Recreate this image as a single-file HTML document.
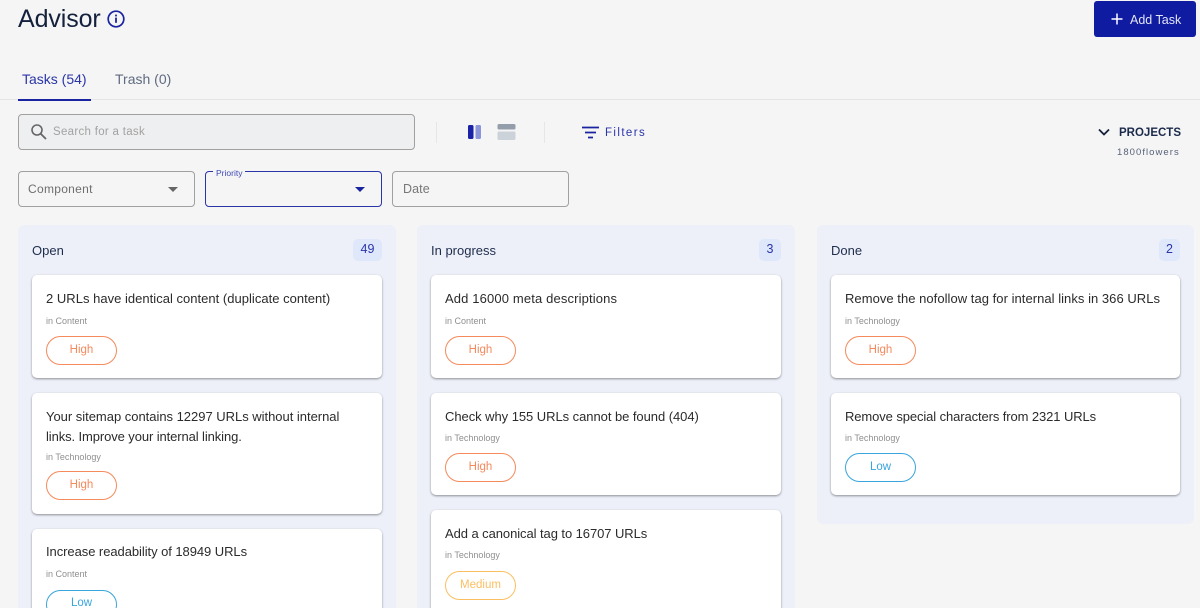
<!DOCTYPE html>
<html>
<head>
<meta charset="utf-8">
<style>
*{box-sizing:border-box}
html,body{margin:0;padding:0;width:1200px;height:608px;overflow:hidden}
body{background:#f5f5f5;font-family:"Liberation Sans",sans-serif;color:#222}
#w{position:relative;width:1200px;height:608px;overflow:hidden;background:#f5f5f5}
.a{position:absolute;white-space:nowrap}
.col{position:absolute;top:225px;width:378px;background:#edf0f8;border-radius:6px}
.colt{position:absolute;top:250px;font-size:13px;line-height:1;color:#1f2d4d;transform:translateY(-6px)}
.cnt{position:absolute;top:239px;height:22px;background:#dfe7fb;border-radius:5px;color:#2a35a8;font-size:12.5px;line-height:21px;text-align:center}
.card{position:absolute;width:350px;background:#fff;border-radius:5px;box-shadow:0 1px 2px rgba(60,60,70,.55)}
.t{position:absolute;left:14px;font-size:13px;line-height:20px;color:#2b2b2b;white-space:nowrap}
.s{position:absolute;left:14px;font-size:9px;line-height:12px;color:#8f8f8f;white-space:nowrap}
.p{position:absolute;left:14px;width:71px;height:29px;border-radius:15px;background:#fff;font-size:11.5px;line-height:26px;text-align:center;border:1px solid}
.h{border-color:#f58a5c;color:#f58a5c}
.l{border-color:#3aa5dc;color:#3aa5dc}
.m{border-color:#fbbf62;color:#fbbf62}
.box{position:absolute;border:1px solid #a0a0a0;border-radius:4px}
</style>
</head>
<body>
<div id="w">
<div class="a" style="left:18px;top:4px;font-size:25px;line-height:30px;color:#14213d;letter-spacing:-.1px">Advisor</div>
<svg class="a" style="left:107px;top:10px" width="18" height="18" viewBox="0 0 18 18"><circle cx="9" cy="9" r="7.8" fill="none" stroke="#1a23a0" stroke-width="1.7"/><rect x="8.1" y="7.6" width="1.8" height="5.2" fill="#1a23a0"/><rect x="8.1" y="4.6" width="1.8" height="1.8" fill="#1a23a0"/></svg>

<div class="a" style="left:1094px;top:1px;width:102px;height:36px;background:#0f1ba0;border-radius:3px"></div>
<svg class="a" style="left:1110px;top:12px" width="14" height="14" viewBox="0 0 14 14"><path d="M7 1.5V12.5M1.5 7H12.5" stroke="#fff" stroke-width="1.5" fill="none"/></svg>
<div class="a" style="left:1130px;top:13px;font-size:12.5px;line-height:14px;color:#e4e6f6">Add Task</div>

<div class="a" style="left:22px;top:71px;font-size:14px;line-height:16px;color:#2a35a8">Tasks (54)</div>
<div class="a" style="left:115px;top:71px;font-size:14px;line-height:16px;color:#5f6b80">Trash (0)</div>
<div class="a" style="left:0;top:99px;width:1200px;height:1px;background:#e4e4e6"></div>
<div class="a" style="left:18px;top:99px;width:73px;height:2px;background:#1a23a0"></div>

<div class="box" style="left:18px;top:114px;width:397px;height:36px;background:#eeeff0"></div>
<svg class="a" style="left:30px;top:123px" width="18" height="18" viewBox="0 0 18 18"><circle cx="7" cy="7" r="5" fill="none" stroke="#666" stroke-width="1.6"/><path d="M10.7 10.7L16 16" stroke="#666" stroke-width="1.8"/></svg>
<div class="a" style="left:53px;top:125px;font-size:11.5px;line-height:14px;color:#a2a2a2;letter-spacing:.3px">Search for a task</div>

<div class="a" style="left:436px;top:122px;width:1px;height:21px;background:#e6e6e6"></div>
<div class="a" style="left:544px;top:122px;width:1px;height:21px;background:#e6e6e6"></div>
<svg class="a" style="left:465px;top:122px" width="54" height="21" viewBox="0 0 54 21"><rect x="3" y="3" width="5.5" height="14" rx="1.5" fill="#1a23a8"/><rect x="10.500" y="3" width="5.500" height="14" rx="1.500" fill="#8c95d8"/><rect x="32.500" y="2" width="18" height="5.500" rx="1.500" fill="#949eab"/><rect x="32.500" y="9.500" width="18" height="8.500" rx="1.500" fill="#ccd2da"/></svg>
<svg class="a" style="left:582px;top:126px" width="17" height="13" viewBox="0 0 17 13"><path d="M0 1.5H17M3 6.5H14M6 11.5H11" stroke="#1a23a0" stroke-width="1.7" fill="none"/></svg>
<div class="a" style="left:605px;top:126px;font-size:11.5px;line-height:14px;color:#2a35a8;letter-spacing:1.4px">Filters</div>

<svg class="a" style="left:1098px;top:128px" width="12" height="9" viewBox="0 0 12 9"><path d="M1 1.5L6 6.5L11 1.5" stroke="#14213d" stroke-width="1.8" fill="none"/></svg>
<div class="a" style="left:1119px;top:126px;font-size:11.5px;line-height:14px;font-weight:bold;color:#1b2a4a">PROJECTS</div>
<div class="a" style="left:1117px;top:147px;font-size:9.5px;line-height:12px;color:#56627a;letter-spacing:1.05px">1800flowers</div>

<div class="box" style="left:18px;top:171px;width:177px;height:36px"></div>
<div class="a" style="left:28px;top:182px;font-size:12px;line-height:15px;color:#6e6e6e;letter-spacing:.3px">Component</div>
<div class="a" style="left:168px;top:187px;width:0;height:0;border-left:5px solid transparent;border-right:5px solid transparent;border-top:5px solid #666"></div>

<div class="box" style="left:205px;top:171px;width:177px;height:36px;border-color:#2a35a8"></div>
<div class="a" style="left:213px;top:168px;padding:0 3px;background:#f5f5f5;font-size:8.5px;line-height:10px;color:#3d48b5">Priority</div>
<div class="a" style="left:355px;top:187px;width:0;height:0;border-left:5px solid transparent;border-right:5px solid transparent;border-top:5px solid #1a23a0"></div>

<div class="box" style="left:392px;top:171px;width:177px;height:36px"></div>
<div class="a" style="left:403px;top:182px;font-size:12.5px;line-height:15px;color:#777;letter-spacing:.1px">Date</div>

<div class="col" style="left:18px;height:400px"></div>
<div class="col" style="left:417px;height:400px"></div>
<div class="col" style="left:817px;height:299px;width:377px"></div>

<div class="colt" style="left:32px">Open</div>
<div class="cnt" style="left:353px;width:29px">49</div>
<div class="colt" style="left:431px">In progress</div>
<div class="cnt" style="left:759px;width:22px">3</div>
<div class="colt" style="left:831px">Done</div>
<div class="cnt" style="left:1159px;width:21px">2</div>

<div class="card" style="left:32px;top:275px;height:103px"><div class="t" style="top:14px;letter-spacing:.02px">2 URLs have identical content (duplicate content)</div><div class="s" style="top:40px">in Content</div><div class="p h" style="top:61px">High</div></div>
<div class="card" style="left:32px;top:393px;height:121px"><div class="t" style="top:14px;letter-spacing:-.02px">Your sitemap contains 12297 URLs without internal<br><span style="letter-spacing:-.1px">links. Improve your internal linking.</span></div><div class="s" style="top:58px">in Technology</div><div class="p h" style="top:78px">High</div></div>
<div class="card" style="left:32px;top:529px;height:100px"><div class="t" style="top:13px;letter-spacing:-.06px">Increase readability of 18949 URLs</div><div class="s" style="top:39px">in Content</div><div class="p l" style="top:60.5px;line-height:25px">Low</div></div>

<div class="card" style="left:431px;top:275px;height:103px"><div class="t" style="top:14px;letter-spacing:.14px">Add 16000 meta descriptions</div><div class="s" style="top:40px">in Content</div><div class="p h" style="top:61px">High</div></div>
<div class="card" style="left:431px;top:393px;height:102px"><div class="t" style="top:14px;letter-spacing:-.05px">Check why 155 URLs cannot be found (404)</div><div class="s" style="top:39px">in Technology</div><div class="p h" style="top:60px">High</div></div>
<div class="card" style="left:431px;top:510px;height:110px"><div class="t" style="top:14px;letter-spacing:-.07px">Add a canonical tag to 16707 URLs</div><div class="s" style="top:39px">in Technology</div><div class="p m" style="top:61px">Medium</div></div>

<div class="card" style="left:831px;top:275px;height:103px;width:349px"><div class="t" style="top:14px;letter-spacing:.04px">Remove the nofollow tag for internal links in 366 URLs</div><div class="s" style="top:40px">in Technology</div><div class="p h" style="top:61px">High</div></div>
<div class="card" style="left:831px;top:393px;height:102px;width:349px"><div class="t" style="top:14px;letter-spacing:-.1px">Remove special characters from 2321 URLs</div><div class="s" style="top:39px">in Technology</div><div class="p l" style="top:60px">Low</div></div>
</div>
</body>
</html>
